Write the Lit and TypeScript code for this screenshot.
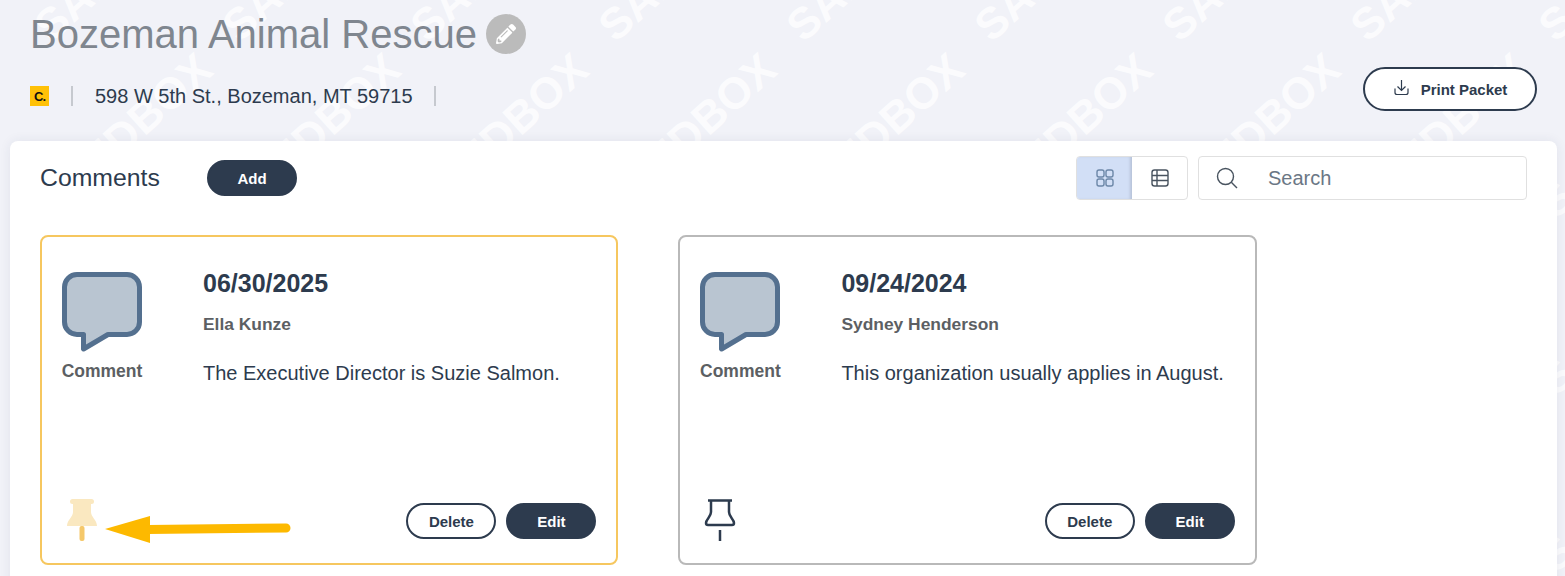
import { LitElement, html, css, svg } from 'lit';
import { customElement } from 'lit/decorators.js';

const notes = [
  { date: '06/30/2025', author: 'Ella Kunze', text: 'The Executive Director is Suzie Salmon.', pinned: true },
  { date: '09/24/2024', author: 'Sydney Henderson', text: 'This organization usually applies in August.', pinned: false }
];

// watermark word ends, one tile every 188 x 177
const marks: { x: number; y: number }[] = [];
for (let row = -1; row < 4; row++) {
  for (let col = 0; col < 10; col++) {
    marks.push({ x: 18 + col * 188, y: 60 + row * 177 });
  }
}

const PENCIL = 'M497.9 142.1l-46.1 46.1c-4.7 4.7-12.3 4.7-17 0l-111-111c-4.7-4.7-4.7-12.3 0-17l46.1-46.1c18.7-18.7 49.1-18.7 67.9 0l60.1 60.1c18.8 18.7 18.8 49.1 0 67.9zM284.2 99.8L21.6 362.4.4 483.9c-2.9 16.4 11.4 30.6 27.8 27.8l121.5-21.3 262.6-262.6c4.7-4.7 4.7-12.3 0-17l-111-111c-4.8-4.7-12.4-4.7-17.1 0zM124.1 339.9c-5.5-5.5-5.5-14.3 0-19.8l154-154c5.5-5.5 14.3-5.5 19.8 0s5.5 14.3 0 19.8l-154 154c-5.5 5.5-14.3 5.5-19.8 0zM88 424h48v36.3l-64.5 11.3-31.1-31.1L51.7 376H88v48z';

@customElement('app-root')
export class AppRoot extends LitElement {
  static styles = css`
    :host {
      display: block;
      position: relative;
      height: 576px;
      overflow: hidden;
      background: #f1f2f8;
      font-family: 'Liberation Sans', Arial, sans-serif;
      color: #2d3b4e;
    }
    .marks { position: absolute; inset: 0; pointer-events: none; }
    .marks span {
      position: absolute;
      width: 300px;
      margin-left: -300px;
      text-align: right;
      font-size: 44px;
      line-height: 50px;
      font-weight: 700;
      color: rgba(255, 255, 255, 0.75);
      transform-origin: right center;
      transform: rotate(-42deg);
    }
    header { position: relative; padding: 14px 28px 0 30px; height: 141px; box-sizing: border-box; }
    .title { display: flex; align-items: center; height: 40px; gap: 9px; }
    h1 { margin: 0; font-size: 40px; font-weight: 400; line-height: 40px; color: #7f868f; }
    .edit {
      width: 40px; height: 40px; border-radius: 50%; background: #bbb;
      display: flex; align-items: center; justify-content: center;
    }
    .edit svg { width: 20px; height: 20px; fill: #fff; }
    .sub { display: flex; justify-content: space-between; margin-top: 13px; }
    .info { display: flex; align-items: center; height: 20px; margin-top: 19px; font-size: 20px; }
    .badge {
      width: 19px; height: 20px; background: #ffc107; color: #111;
      font-size: 13px; letter-spacing: -1px; font-weight: 700;
      display: flex; align-items: center; justify-content: center;
    }
    .sep { width: 2px; height: 20px; background: #c6c9cf; }
    .sep.a { margin: 0 22px; }
    .sep.b { margin-left: 21px; }
    button {
      font-family: inherit; font-weight: 700; font-size: 15px; border-radius: 22px;
      box-sizing: border-box; border: 2px solid #2d3b4e; color: #2d3b4e; background: #fff; padding: 0;
    }
    button.dark { background: #2d3b4e; color: #fff; }
    .print {
      width: 174px; height: 44px; display: flex; align-items: center; justify-content: center; gap: 11px;
    }
    .print svg { width: 17px; height: 17px; fill: none; stroke: #2d3b4e; stroke-width: 1.2; margin-top: -4px; }
    main {
      position: relative;
      margin: 0 8px 0 10px; height: 460px; background: #fff; border-radius: 8px 8px 0 0;
      box-shadow: 0 0 12px rgba(40, 50, 90, 0.08); padding: 15px 30px 0; box-sizing: border-box;
    }
    .bar { display: flex; align-items: center; height: 44px; }
    .bar h2 { margin: 0; font-size: 24.8px; font-weight: 400; width: 167px; }
    .add { width: 90px; height: 36px; }
    .toggle {
      margin-left: auto; display: flex; width: 112px; height: 44px; box-sizing: border-box;
      border: 1px solid #e0e0e0; border-radius: 4px; overflow: hidden;
    }
    .toggle div { flex: 1; display: flex; align-items: center; justify-content: center; }
    .toggle .on { flex: 0 0 55px; background: #d2dff6; box-shadow: inset -3px 0 3px -1px #b6c2d8; }
    .toggle svg { width: 20px; height: 20px; fill: none; stroke-width: 1.4; }
    .on svg { stroke: #6c87a8; }
    .off svg { stroke: #48535f; }
    .search {
      margin-left: 10px; width: 329px; height: 44px; box-sizing: border-box;
      border: 1px solid #e0e0e0; border-radius: 4px; display: flex; align-items: center;
      padding-left: 17px; gap: 30px; font-size: 20px; color: #6b7785;
    }
    .search svg { width: 22px; height: 22px; fill: none; stroke: #48535f; stroke-width: 1.4; }
    .cards { display: flex; gap: 60px; margin-top: 35px; }
    .card {
      position: relative; width: 578.4px; height: 330px; box-sizing: border-box;
      border: 2px solid #b9b9b9; border-radius: 8px; padding: 32px 20px 21px;
      display: flex; flex-direction: column;
    }
    .card.pinned { border-color: #f6c75f; }
    .top { flex: 1; display: flex; gap: 61px; }
    .kind { width: 80px; padding-top: 3px; text-align: center; }
    .kind svg { display: block; width: 80px; height: 80px; }
    .kind div { margin: 9px -3px 0; font-size: 17.5px; line-height: 20px; font-weight: 700; color: #5c5f63; }
    .date { font-size: 25px; line-height: 28px; font-weight: 700; }
    .who { margin-top: 17px; font-size: 17.4px; line-height: 20px; font-weight: 700; color: #5c5f63; }
    .text { margin-top: 26px; font-size: 20px; line-height: 26px; }
    .foot { display: flex; align-items: center; gap: 10px; }
    .pin { width: 32px; height: 44px; margin: 0 auto 0 4px; fill: none; stroke: #2d3b4e; stroke-width: 2.5; }
    .foot button { width: 90px; height: 36px; margin-top: 2px; }
    .arrow { position: absolute; left: 61px; top: 277px; width: 190px; height: 32px; }
  `;

  private bubble() {
    return svg`<svg viewBox="0 0 80 80">
      <path d="M15 2.500H65a12.500 12.500 0 0 1 12.500 12.500V50a12.500 12.500 0 0 1-12.500 12.500H46L21.500 77V62.500H15A12.500 12.500 0 0 1 2.500 50V15A12.500 12.500 0 0 1 15 2.500z"
        fill="#b9c5d1" stroke="#54708f" stroke-width="5" stroke-linejoin="round"/>
    </svg>`;
  }

  private pin(pinned: boolean) {
    if (pinned) {
      return svg`<svg class="pin" viewBox="0 0 32 44" style="stroke:none">
        <rect x="4" y="1" width="24" height="5" rx="2.500" fill="#fae8c0"/>
        <path d="M7 5H25V14C25 19 31 22 31 28H1C1 22 7 19 7 14z" fill="#fae8c0"/>
        <rect x="13.500" y="28" width="5" height="15" rx="2" fill="#f5c86a"/>
      </svg>`;
    }
    return svg`<svg class="pin" viewBox="0 0 32 44">
      <path d="M4 2.500H28M7 2.500V14C7 19 2 21 2 25C2 26.500 3 27 4 27H28C29 27 30 26.500 30 25C30 21 25 19 25 14V2.500"/>
      <path d="M16 32V43"/>
    </svg>`;
  }

  private card(n: (typeof notes)[number]) {
    return html`
      <div class="card ${n.pinned ? 'pinned' : ''}">
        <div class="top">
          <div class="kind">${this.bubble()}<div>Comment</div></div>
          <div>
            <div class="date">${n.date}</div>
            <div class="who">${n.author}</div>
            <div class="text">${n.text}</div>
          </div>
        </div>
        <div class="foot">
          ${this.pin(n.pinned)}
          <button>Delete</button>
          <button class="dark">Edit</button>
        </div>
        ${n.pinned
          ? svg`<svg class="arrow" viewBox="0 0 190 32">
              <path d="M2 15L47 2V29z" fill="#fdb900"/>
              <path d="M45 15.500L183 14" stroke="#fdb900" stroke-width="9" stroke-linecap="round"/>
            </svg>`
          : ''}
      </div>
    `;
  }

  render() {
    return html`
      <div class="marks">
        ${marks.map(m => html`<span style="left:${m.x + 187}px;top:${m.y - 23}px">SANDBOX</span>`)}
      </div>
      <header>
        <div class="title">
          <h1>Bozeman Animal Rescue</h1>
          <div class="edit"><svg viewBox="0 0 512 512"><path d=${PENCIL}/></svg></div>
        </div>
        <div class="sub">
          <div class="info">
            <div class="badge">C.</div>
            <div class="sep a"></div>
            <div>598 W 5th St., Bozeman, MT 59715</div>
            <div class="sep b"></div>
          </div>
          <button class="print">
            <svg viewBox="0 0 17 17">
              <path d="M8.500 1V11M4.500 7.500L8.500 11.500L12.500 7.500"/>
              <path d="M2 9.500V13.500C2 14.800 2.800 15.500 4 15.500H13C14.200 15.500 15 14.800 15 13.500V9.500"/>
            </svg>
            Print Packet
          </button>
        </div>
      </header>
      <main>
        <div class="bar">
          <h2>Comments</h2>
          <button class="dark add">Add</button>
          <div class="toggle">
            <div class="on">
              <svg viewBox="0 0 20 20">
                <rect x="2" y="2" width="7" height="7" rx="2"/><rect x="11" y="2" width="7" height="7" rx="2"/>
                <rect x="2" y="11" width="7" height="7" rx="2"/><rect x="11" y="11" width="7" height="7" rx="2"/>
              </svg>
            </div>
            <div class="off">
              <svg viewBox="0 0 20 20">
                <rect x="2" y="2" width="16" height="16" rx="2.500"/>
                <path d="M2 7.500H18M2 12.500H18M7 2V18"/>
              </svg>
            </div>
          </div>
          <div class="search">
            <svg viewBox="0 0 22 22"><circle cx="9.500" cy="9.500" r="8"/><path d="M15.300 15.300L21 21"/></svg>
            Search
          </div>
        </div>
        <div class="cards">${notes.map(n => this.card(n))}</div>
      </main>
    `;
  }
}
